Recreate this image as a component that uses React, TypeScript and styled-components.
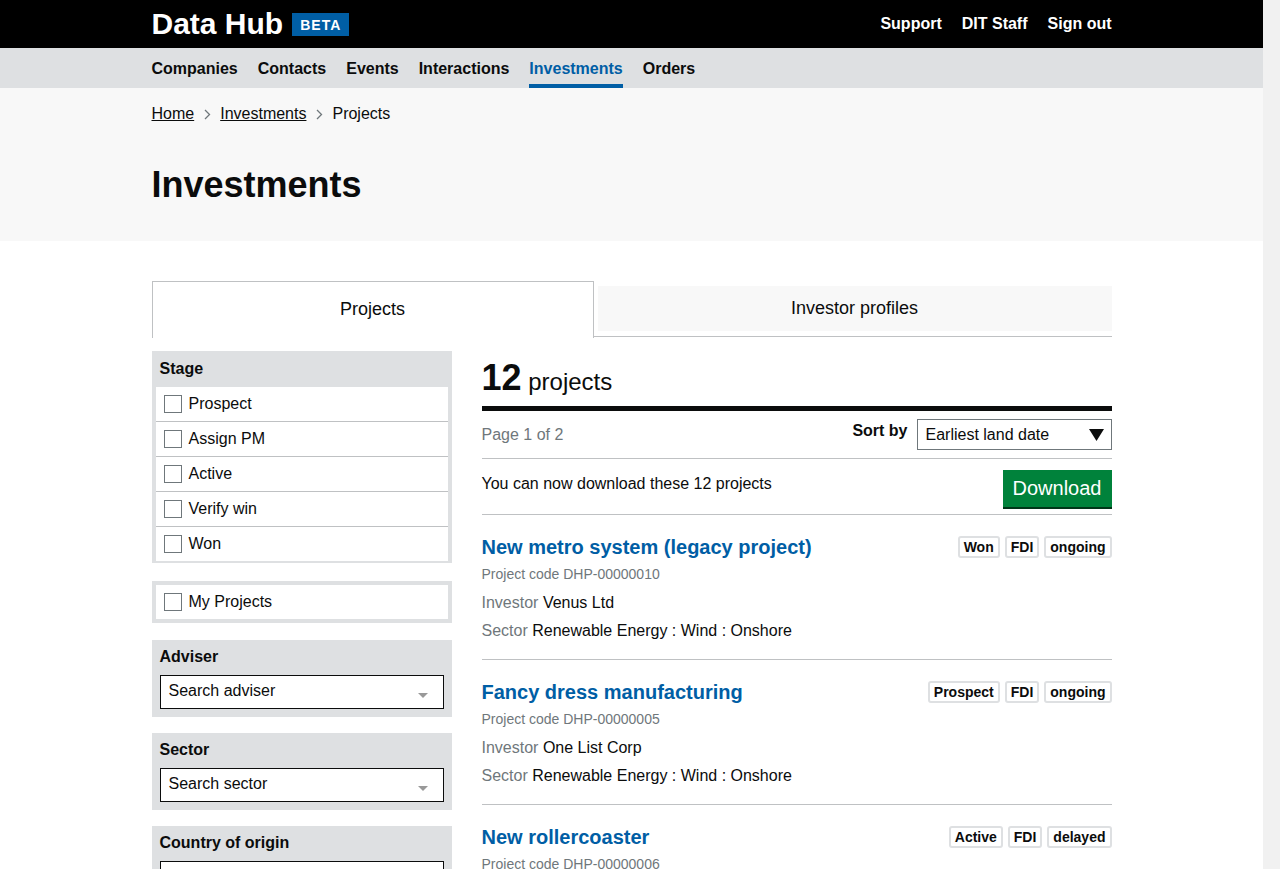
import React from 'react';
import styled, { createGlobalStyle } from 'styled-components';

const GlobalStyle = createGlobalStyle`
    html {
        background: #f1f1f1;
    }
    body {
        margin: 0 17px 0 0;
        padding: 0;
        background: #fff;
        color: #0b0c0c;
        font-family: "Liberation Sans", Arial, sans-serif;
        font-size: 16px;
    }
    * {
        box-sizing: border-box;
    }
`;

const stages = ['Prospect', 'Assign PM', 'Active', 'Verify win', 'Won'];

const projects = [
    { name: 'New metro system (legacy project)', code: 'DHP-00000010', investor: 'Venus Ltd', sector: 'Renewable Energy : Wind : Onshore', badges: ['Won', 'FDI', 'ongoing'] },
    { name: 'Fancy dress manufacturing', code: 'DHP-00000005', investor: 'One List Corp', sector: 'Renewable Energy : Wind : Onshore', badges: ['Prospect', 'FDI', 'ongoing'] },
    { name: 'New rollercoaster', code: 'DHP-00000006', investor: 'Venus Ltd', sector: 'Renewable Energy : Wind : Onshore', badges: ['Active', 'FDI', 'delayed'] },
    { name: 'New golf course', code: 'DHP-00000007', investor: 'Lambda plc', sector: 'Renewable Energy : Wind : Onshore', badges: ['Assign PM', 'FDI', 'ongoing'] },
    { name: 'Cheese manufacturing', code: 'DHP-00000008', investor: 'Mars Exports Ltd', sector: 'Food and Drink', badges: ['Verify win', 'FDI', 'ongoing'] },
    { name: 'New hotel (commitment to invest)', code: 'DHP-00000009', investor: 'Venus Ltd', sector: 'Renewable Energy : Wind : Onshore', badges: ['Prospect', 'FDI', 'ongoing'] },
];

function Chevron() {
    return (
        <Sep>
            <svg width="7" height="11" viewBox="0 0 7 11">
                <path d="M1 1l4.5 4.5L1 10" fill="none" stroke="#6f777b" strokeWidth="1.3" />
            </svg>
        </Sep>
    );
}

function FilterInput({ label, placeholder }: { label: string; placeholder: string }) {
    return (
        <Group $pad>
            <GroupTitle>{label}</GroupTitle>
            <SearchBox>
                {placeholder}
                <SmallArrow />
            </SearchBox>
        </Group>
    );
}

function App() {
    return (
        <>
            <GlobalStyle />
            <Header>
                <Inner>
                    <Logo>
                        Data Hub <Beta>BETA</Beta>
                    </Logo>
                    <TopLinks>
                        <a href="#">Support</a>
                        <a href="#">DIT Staff</a>
                        <a href="#">Sign out</a>
                    </TopLinks>
                </Inner>
            </Header>

            <Nav>
                <Inner>
                    {['Companies', 'Contacts', 'Events', 'Interactions', 'Investments', 'Orders'].map((item) => (
                        <NavItem key={item} href="#" $active={item === 'Investments'}>{item}</NavItem>
                    ))}
                </Inner>
            </Nav>

            <Hero>
                <HeroInner>
                    <Crumbs>
                        <a href="#">Home</a>
                        <Chevron />
                        <a href="#">Investments</a>
                        <Chevron />
                        <span>Projects</span>
                    </Crumbs>
                    <PageTitle>Investments</PageTitle>
                </HeroInner>
            </Hero>

            <Main>
                <Tabs>
                    <Tab $active $width={442}>Projects</Tab>
                    <Tab $width={514}>Investor profiles</Tab>
                </Tabs>

                <Columns>
                    <Sidebar>
                        <Group>
                            <GroupTitle $list>Stage</GroupTitle>
                            <OptionList>
                                {stages.map((s) => (
                                    <Option key={s}><Box />{s}</Option>
                                ))}
                            </OptionList>
                        </Group>

                        <Group $border>
                            <OptionList>
                                <Option><Box />My Projects</Option>
                            </OptionList>
                        </Group>

                        <FilterInput label="Adviser" placeholder="Search adviser" />
                        <FilterInput label="Sector" placeholder="Search sector" />
                        <FilterInput label="Country of origin" placeholder="Search country" />
                        <FilterInput label="UK Region" placeholder="Search UK region" />
                    </Sidebar>

                    <Results>
                        <Count>
                            <strong>12</strong> projects
                        </Count>
                        <Bar>
                            <Muted>Page 1 of 2</Muted>
                            <Sort>
                                <strong>Sort by</strong>
                                <Select>
                                    Earliest land date
                                    <svg width="15" height="12" viewBox="0 0 15 12">
                                        <path d="M0 0h15L7.5 12z" fill="#0b0c0c" />
                                    </svg>
                                </Select>
                            </Sort>
                        </Bar>
                        <Bar $download>
                            <span>You can now download these 12 projects</span>
                            <DownloadBtn href="#">Download</DownloadBtn>
                        </Bar>

                        {projects.map((p) => (
                            <Item key={p.code}>
                                <ItemHead>
                                    <ItemTitle href="#">{p.name}</ItemTitle>
                                    <Badges>
                                        {p.badges.map((b) => <Badge key={b}>{b}</Badge>)}
                                    </Badges>
                                </ItemHead>
                                <Code>Project code {p.code}</Code>
                                <Meta><Muted>Investor</Muted> {p.investor}</Meta>
                                <Meta><Muted>Sector</Muted> {p.sector}</Meta>
                            </Item>
                        ))}
                    </Results>
                </Columns>
            </Main>
        </>
    );
}

export default App;

const Inner = styled.div`
    width: 960px;
    margin: 0 auto;
    display: flex;
    align-items: center;
`;

const Header = styled.header`
    background: #000;
    color: #fff;
    height: 48px;

    ${Inner} {
        height: 48px;
        justify-content: space-between;
    }
`;

const Logo = styled.div`
    font-size: 30px;
    font-weight: bold;
    display: flex;
    align-items: center;
    gap: 9px;
    line-height: 1;
`;

const Beta = styled.span`
    background: #005ea5;
    font-size: 14px;
    letter-spacing: 1px;
    padding: 4px 8px 3px;
    line-height: 16px;
`;

const TopLinks = styled.nav`
    display: flex;
    gap: 20px;

    a {
        color: #fff;
        font-weight: bold;
        text-decoration: none;
    }
`;

const Nav = styled.nav`
    background: #dee0e2;
    height: 40px;

    ${Inner} {
        height: 40px;
        gap: 20px;
        align-items: stretch;
    }
`;

const NavItem = styled.a<{ $active?: boolean }>`
    display: flex;
    align-items: center;
    font-weight: bold;
    text-decoration: none;
    color: ${(p) => (p.$active ? '#005ea5' : '#0b0c0c')};
    border-bottom: 4px solid ${(p) => (p.$active ? '#005ea5' : 'transparent')};
    padding-top: 6px;
`;

const Hero = styled.div`
    background: #f8f8f8;
    height: 153px;
`;

const HeroInner = styled.div`
    width: 960px;
    margin: 0 auto;
    padding-top: 16px;
`;

const Crumbs = styled.div`
    display: flex;
    align-items: center;
    line-height: 20px;

    a {
        color: #0b0c0c;
    }
`;

const Sep = styled.span`
    display: inline-flex;
    margin: 0 9px 0 10px;
`;

const PageTitle = styled.h1`
    font-size: 36px;
    line-height: 40px;
    margin: 41px 0 0;
`;

const Main = styled.main`
    width: 960px;
    margin: 0 auto;
    padding: 40px 0 60px;
`;

const Tabs = styled.div`
    display: flex;
    align-items: flex-start;
    gap: 4px;
    height: 56px;
    border-bottom: 1px solid #bfc1c3;
`;

const Tab = styled.div<{ $active?: boolean; $width: number }>`
    width: ${(p) => p.$width}px;
    display: flex;
    align-items: center;
    justify-content: center;
    font-size: 18px;
    background: ${(p) => (p.$active ? '#fff' : '#f8f8f8')};
    height: ${(p) => (p.$active ? '57px' : '45px')};
    margin-top: ${(p) => (p.$active ? '0' : '5px')};
    margin-bottom: ${(p) => (p.$active ? '-1px' : '0')};
    border: ${(p) => (p.$active ? '1px solid #bfc1c3' : 'none')};
    border-bottom: none;
    padding-bottom: ${(p) => (p.$active ? '2px' : '0')};
    position: relative;
    z-index: 1;
`;

const Columns = styled.div`
    display: flex;
    gap: 30px;
    margin-top: 14px;
    align-items: flex-start;
`;

const Sidebar = styled.aside`
    width: 300px;
    flex-shrink: 0;
    display: flex;
    flex-direction: column;
    gap: 16px;
`;

const Group = styled.div<{ $pad?: boolean; $border?: boolean }>`
    background: #dee0e2;
    padding: ${(p) => (p.$pad ? '7px 8px 8px' : p.$border ? '4px' : '0 4px 2px')};
    margin: ${(p) => (p.$border ? '2px 0 1px' : '0')};
`;

const GroupTitle = styled.div<{ $list?: boolean }>`
    font-weight: bold;
    line-height: 20px;
    padding: ${(p) => (p.$list ? '8px 4px' : '0 0 8px')};
`;

const OptionList = styled.div`
    background: #fff;
`;

const Option = styled.label`
    display: flex;
    align-items: center;
    height: 35px;
    padding: 0 8px;
    gap: 7px;
    border-bottom: 1px solid #bfc1c3;

    &:last-child {
        border-bottom: none;
        height: 34px;
    }
`;

const Box = styled.span`
    width: 18px;
    height: 18px;
    border: 1px solid #6f777b;
    background: #fff;
    flex-shrink: 0;
`;

const SearchBox = styled.div`
    height: 34px;
    background: #fff;
    border: 1px solid #0b0c0c;
    display: flex;
    align-items: center;
    justify-content: space-between;
    padding: 0 15px 3px 8px;
`;

const SmallArrow = styled.span`
    width: 0;
    height: 0;
    border-left: 5px solid transparent;
    border-right: 5px solid transparent;
    border-top: 5px solid #999;
    margin-top: 10px;
`;

const Results = styled.section`
    flex: 1;
`;

const Count = styled.h2`
    margin: 0;
    padding-top: 5px;
    padding-bottom: 3px;
    font-size: 24px;
    font-weight: normal;
    line-height: 43px;
    border-bottom: 5px solid #0b0c0c;

    strong {
        font-size: 36px;
    }
`;

const Bar = styled.div<{ $download?: boolean }>`
    display: flex;
    justify-content: space-between;
    align-items: center;
    border-bottom: 1px solid #bfc1c3;
    height: ${(p) => (p.$download ? '56px' : '48px')};
    padding-bottom: ${(p) => (p.$download ? '6px' : '0')};
`;

const Muted = styled.span`
    color: #6f777b;
`;

const Sort = styled.div`
    display: flex;
    align-items: center;
    gap: 9px;

    strong {
        margin-top: -8px;
    }
`;

const Select = styled.div`
    width: 195px;
    height: 31px;
    border: 1px solid #6f777b;
    display: flex;
    align-items: center;
    justify-content: space-between;
    padding: 0 7px 0 8px;
`;

const DownloadBtn = styled.a`
    background: #00823b;
    color: #fff;
    text-decoration: none;
    font-size: 20px;
    height: 37px;
    padding: 0 10px;
    display: flex;
    align-items: center;
    box-shadow: 0 2px 0 #003618;
    margin-top: 9px;
`;

const Item = styled.article`
    padding: 20px 0 18px;
    border-bottom: 1px solid #bfc1c3;
`;

const ItemHead = styled.div`
    display: flex;
    justify-content: space-between;
    align-items: flex-start;
`;

const ItemTitle = styled.a`
    color: #005ea5;
    font-size: 20px;
    font-weight: bold;
    line-height: 24px;
    text-decoration: none;
`;

const Badges = styled.div`
    display: flex;
    gap: 5px;
    margin-top: 1px;
`;

const Badge = styled.span`
    border: 2px solid #dee0e2;
    border-radius: 3px;
    font-size: 14px;
    font-weight: bold;
    line-height: 18px;
    padding: 0 4px;
`;

const Code = styled.div`
    color: #6f777b;
    font-size: 14px;
    line-height: 18px;
    margin-top: 6px;
`;

const Meta = styled.div`
    line-height: 20px;
    margin-top: 10px;

    & + & {
        margin-top: 8px;
    }
`;
